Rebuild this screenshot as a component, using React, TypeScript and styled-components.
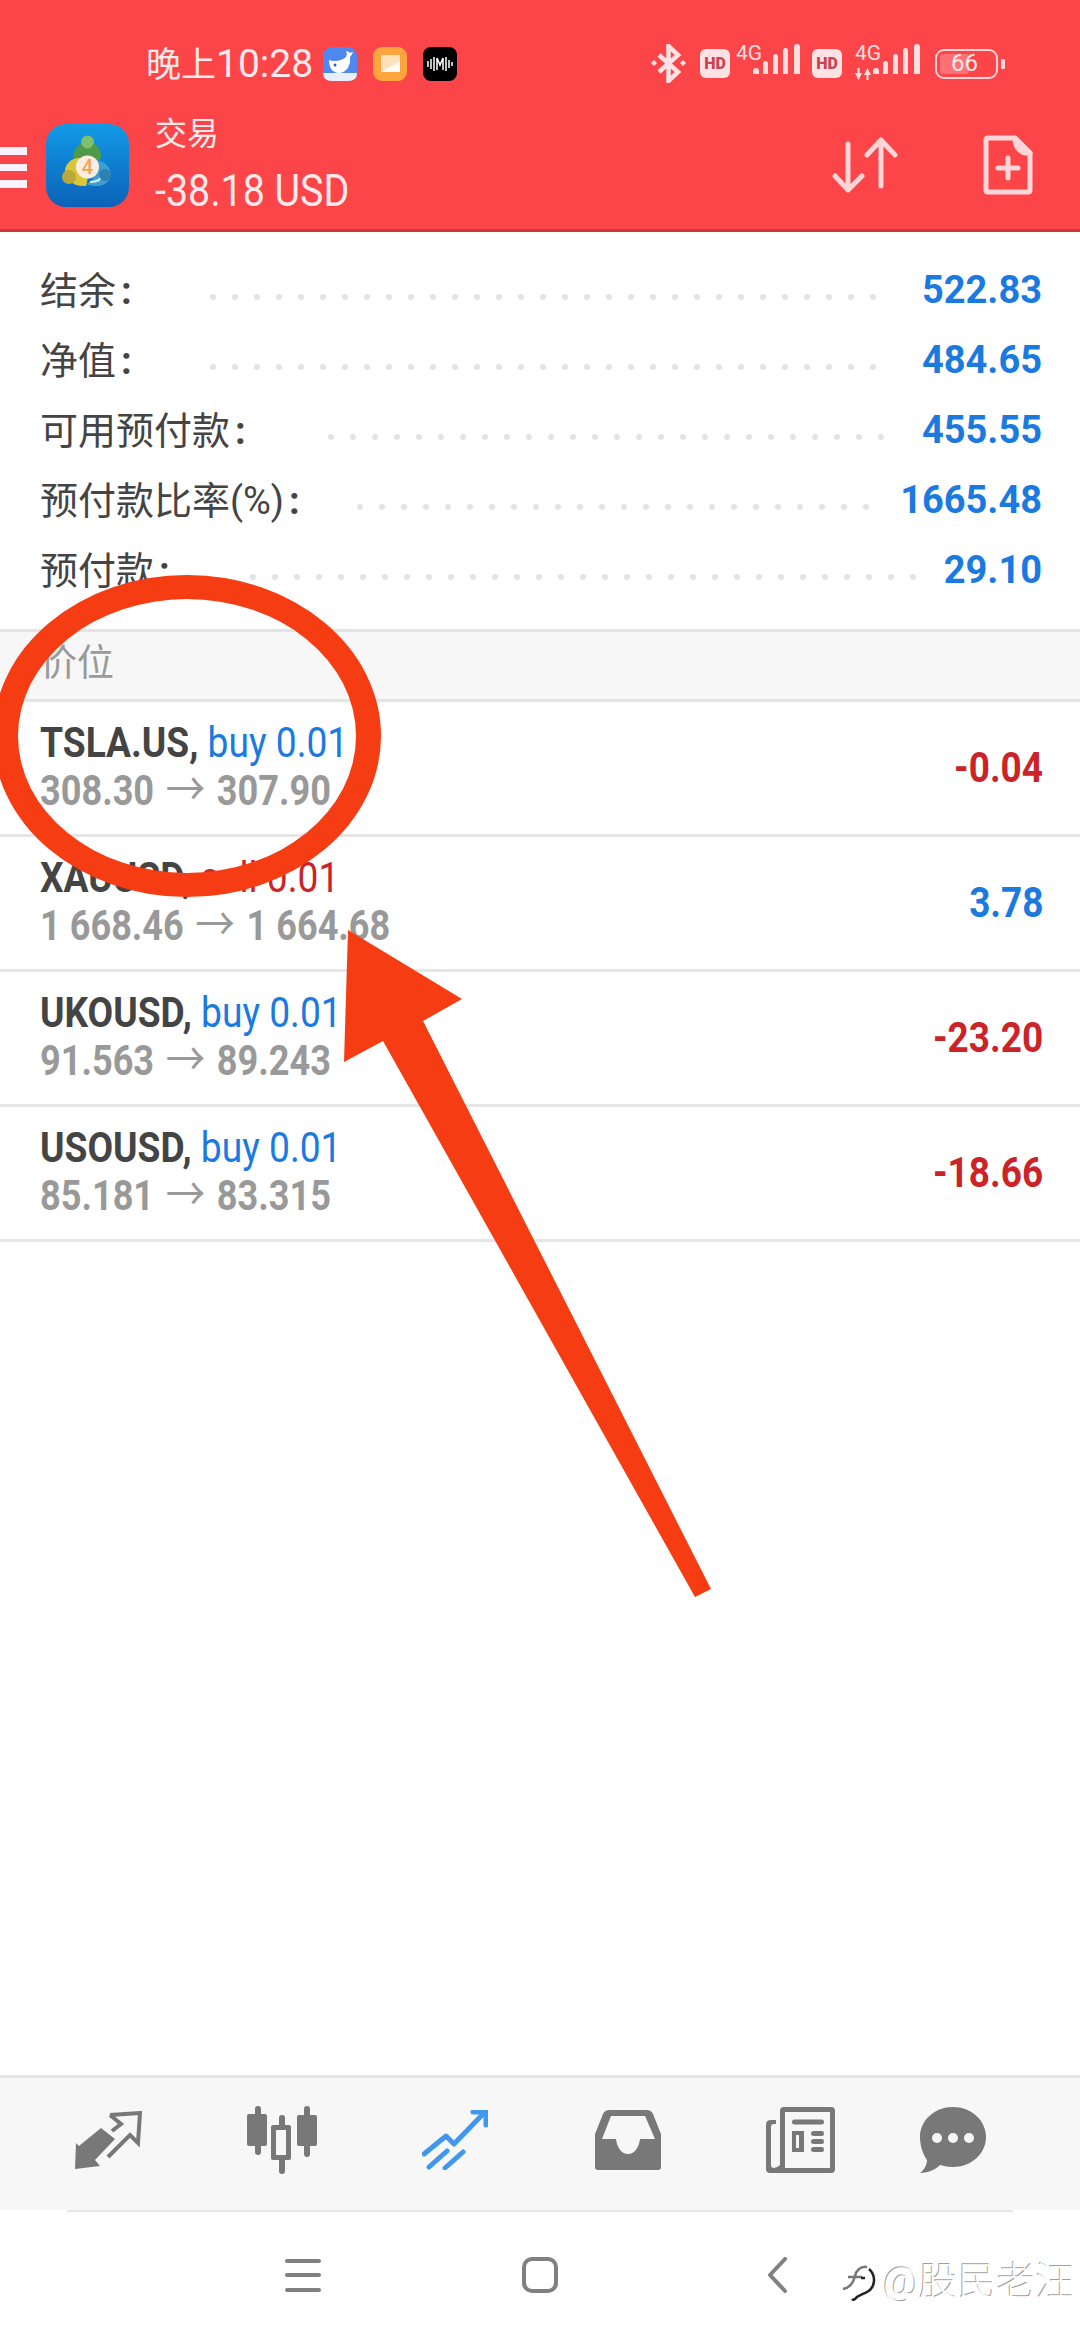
import styled, { createGlobalStyle } from "styled-components";

interface Account {
  label: string;
  value: string;
  labelWidth: number;
  dots: number;
}

interface Trade {
  symbol: string;
  side: "buy" | "sell";
  open: string;
  close: string;
  profit: string;
}

const accounts: Account[] = [
  { label: "结余", value: "522.83", labelWidth: 170, dots: 31 },
  { label: "净值", value: "484.65", labelWidth: 170, dots: 31 },
  { label: "可用预付款", value: "455.55", labelWidth: 288, dots: 26 },
  { label: "预付款比率(%)", value: "1665.48", labelWidth: 317, dots: 24 },
  { label: "预付款", value: "29.10", labelWidth: 210, dots: 31 },
];

const trades: Trade[] = [
  { symbol: "TSLA.US", side: "buy", open: "308.30", close: "307.90", profit: "-0.04" },
  { symbol: "XAUUSD", side: "sell", open: "1 668.46", close: "1 664.68", profit: "3.78" },
  { symbol: "UKOUSD", side: "buy", open: "91.563", close: "89.243", profit: "-23.20" },
  { symbol: "USOUSD", side: "buy", open: "85.181", close: "83.315", profit: "-18.66" },
];

const BLUE = "#1a7ae0";
const RED = "#cc2329";
const GREY = "#787878";

const Global = createGlobalStyle`
  html, body {
    margin: 0;
    padding: 0;
    background: #fff;
  }
  body {
    font-family: Roboto, "Noto Sans CJK SC", sans-serif;
  }
`;

const SignalBars = () => (
  <svg width="47" height="30" viewBox="0 0 47 30" fill="#ffdfe0">
    <path d="M0 30v-3q0-3 3-3t3 3v3z" />
    <path d="M10 30V20q0-3 2.500-3t2.500 3v10z" />
    <path d="M20 30V13q0-3 2.500-3t2.500 3v17z" />
    <path d="M30 30V7q0-3 2.500-3t2.500 3v23z" />
    <path d="M41 30V3q0-3 3-3t3 3v27z" />
  </svg>
);

const App = () => {
  return (
    <Page>
      <Global />
      <Header>
        <StatusBar>
          <Time>
            晚上<TimeDigits>10:28</TimeDigits>
          </Time>
          <AppTray>
            <svg width="34" height="34" viewBox="0 0 34 34">
              <rect width="34" height="34" rx="9" fill="#4f88ee" />
              <path d="M0 26h34q0 8-9 8H9q-9 0-9-8z" fill="#e8f0ff" />
              <path d="M6 13c5 2 13 1 17-3 1-2 1-4 0-6 2 0 3 1 4 2 1-1 2-1 3-1-1 2-2 4-3 5 1 9-4 16-11 16S6 20 6 13z" fill="#fff" />
              <circle cx="12" cy="18" r="1.500" fill="#2a5fc0" />
            </svg>
            <svg width="34" height="34" viewBox="0 0 34 34">
              <rect width="34" height="34" rx="9" fill="#ffa53e" />
              <rect x="8" y="8" width="19" height="17" fill="#ffe0b8" />
              <path d="M8 25l19-11v11z" fill="#fff" opacity="0.85" />
            </svg>
            <svg width="34" height="34" viewBox="0 0 34 34" fill="none" stroke="#fff" strokeWidth="1.500">
              <rect width="34" height="34" rx="8" fill="#000" stroke="none" />
              <path d="M5 14v6M8 12v10M11 10v14M14 23V11l3 7 3-7v12M23 10v14M26 13v8M29 15v4" />
            </svg>
          </AppTray>
          <StatusIcons>
            <svg width="35" height="39" viewBox="0 0 35 39" fill="none" stroke="#ffe3e4" strokeWidth="4.500">
              <path d="M8 11l19 17-9.500 9V2L27 11 8 28" />
              <path d="M3 16l3 3-3 3-3-3z" fill="#ffe3e4" stroke="none" />
              <path d="M32 16l3 3-3 3-3-3z" fill="#ffe3e4" stroke="none" />
            </svg>
            <HdBadge $left={14}>HD</HdBadge>
            <NetCell $left={6} $width={64}>
              <NetLabel>4G</NetLabel>
              <SignalBars />
            </NetCell>
            <HdBadge $left={12}>HD</HdBadge>
            <NetCell $left={13} $width={65}>
              <NetLabel>4G</NetLabel>
              <NetActivity viewBox="0 0 16 12" fill="#ffdfe0">
                <path d="M0 5h2.500V0h2v5H7l-3.500 7z" />
                <path d="M9 7h2.500v5h2V7H16l-3.500-7z" />
              </NetActivity>
              <SignalBars />
            </NetCell>
            <Battery>
              <BatteryFill />
              <BatteryText>66</BatteryText>
            </Battery>
            <BatteryNub />
          </StatusIcons>
        </StatusBar>

        <AppBar>
          <Burger>
            <span />
            <span />
            <span />
          </Burger>
          <AppLogo viewBox="0 0 83 83">
            <defs>
              <linearGradient id="mt4bg" x1="0" y1="0" x2="0" y2="1">
                <stop offset="0" stopColor="#129ae6" />
                <stop offset="1" stopColor="#0b62b8" />
              </linearGradient>
            </defs>
            <rect width="83" height="83" rx="20" fill="url(#mt4bg)" />
            <path d="M28 36c-2-8 3-14 8-17 1-5 9-5 11 0 6 3 10 10 7 17z" fill="#4f9a48" />
            <circle cx="41.500" cy="18" r="6.500" fill="#7fc06c" />
            <path d="M34 34c-7-1-15 5-15 13 0 9 9 16 21 15 3-8 2-20-6-28z" fill="#d8c538" />
            <circle cx="23" cy="53" r="7" fill="#b9a93c" />
            <path d="M50 36c9 1 15 8 15 15-1 9-12 14-25 9 8-3 13-13 10-24z" fill="#3f9fd0" />
            <path d="M44 58c7 0 12-3 13-9" fill="none" stroke="#d9f0fa" strokeWidth="2" />
            <circle cx="59" cy="51" r="6" fill="#2b80b4" />
            <circle cx="41.500" cy="43" r="11.500" fill="#fbeee0" />
            <LogoDigit x="41.500" y="50" textAnchor="middle">4</LogoDigit>
          </AppLogo>
          <TitleBlock>
            <ScreenTitle>交易</ScreenTitle>
            <Balance>-38.18 USD</Balance>
          </TitleBlock>
          <SortIcon viewBox="0 0 66 57" fill="none" stroke="#ffd5d7" strokeWidth="5" strokeLinecap="round" strokeLinejoin="round">
            <path d="M16 8v46M3 40l13 14 14-14" />
            <path d="M49 4v46M35 19L49 4l14 15" />
          </SortIcon>
          <NewOrderIcon viewBox="0 0 50 60" fill="none" stroke="#ffd5d7" strokeWidth="5" strokeLinejoin="round">
            <path d="M5 3h27l15 15v37q0 2-2 2H5q-2 0-2-2V5q0-2 2-2z" />
            <path d="M32 3l15 15c-9 1-15-5-15-15z" fill="#ffd5d7" />
            <path d="M25 23v20M15 33h20" strokeLinecap="round" />
          </NewOrderIcon>
        </AppBar>
      </Header>

      <AccountPanel>
        {accounts.map((a) => (
          <AccountRow key={a.label}>
            <AccountLabel $width={a.labelWidth}>
              {a.label}
              <Colon>:</Colon>
            </AccountLabel>
            <Leader>
              {Array.from({ length: a.dots }).map((_, i) => (
                <LeaderDot key={i} />
              ))}
            </Leader>
            <AccountValue>{a.value}</AccountValue>
          </AccountRow>
        ))}
      </AccountPanel>

      <SectionHeader>价位</SectionHeader>

      {trades.map((t) => (
        <TradeRow key={t.symbol}>
          <TradeInfo>
            <TradeLine>
              <Symbol>{t.symbol}, </Symbol>
              <Side $color={t.side === "buy" ? BLUE : RED}>{t.side} 0.01</Side>
            </TradeLine>
            <PriceLine>
              {t.open} <PriceArrow>→</PriceArrow> {t.close}
            </PriceLine>
          </TradeInfo>
          <Profit $color={t.profit.startsWith("-") ? RED : BLUE}>{t.profit}</Profit>
        </TradeRow>
      ))}

      <Spacer />

      <TabBar>
        <TabCell>
          <svg width="67" height="59" viewBox="0 0 67 59">
            <path d="M0 58l1-26 3 3 22-18 14 11-20 21 5 6z" fill={GREY} />
            <path d="M35 4l30-2-2 30-8-8-22 22M35 4l11 9-9 7" fill="none" stroke={GREY} strokeWidth="4" />
          </svg>
        </TabCell>
        <TabCell>
          <svg width="70" height="68" viewBox="0 0 70 68" fill={GREY}>
            <rect x="8" width="6" height="49" rx="3" />
            <rect y="8" width="20" height="32" rx="2" />
            <rect x="32" y="9" width="6" height="59" rx="3" />
            <rect x="24" y="19" width="20" height="35" rx="2" />
            <rect x="29" y="24" width="10" height="25" fill="#f7f7f7" />
            <rect x="57" width="6" height="51" rx="3" />
            <rect x="50" y="9" width="20" height="31" rx="2" />
          </svg>
        </TabCell>
        <TabCell>
          <svg width="66" height="60" viewBox="0 0 66 60" fill="none" stroke="#3f97ee" strokeWidth="5" strokeLinecap="round" strokeLinejoin="round">
            <path d="M2 44l22-18 8 8L62 3" />
            <path d="M51 2h13v13" />
            <path d="M7 57l18-16M23 58l18-16" />
          </svg>
        </TabCell>
        <TabCell>
          <svg width="66" height="60" viewBox="0 0 66 60" fill={GREY}>
            <path
              fillRule="evenodd"
              d="M14 0h38q4 0 6 4l8 20v33q0 3-3 3H3q-3 0-3-3V24L8 4q2-4 6-4zM16 6L7 29h14c1 9 6 15 12 15s11-6 12-15h15L50 6z"
            />
          </svg>
        </TabCell>
        <TabCell>
          <svg width="69" height="66" viewBox="0 0 69 66" fill={GREY}>
            <path
              fillRule="evenodd"
              d="M18 0h47q4 0 4 4v58q0 4-4 4H4q-4 0-4-4V18q0-5 5-5h5v4H8q-3 0-3 3v38q0 3 3 3t6-3V4q0-4 4-4zm1 5v56h45V5z"
            />
            <rect x="26" y="12.500" width="32" height="5" rx="2.500" />
            <path fillRule="evenodd" d="M26 24h12v21H26zm4 4v13h3V28z" />
            <rect x="45" y="24" width="13" height="5" rx="2.500" />
            <rect x="45" y="32" width="13" height="5" rx="2.500" />
            <rect x="45" y="40" width="13" height="5" rx="2.500" />
          </svg>
        </TabCell>
        <TabCell>
          <svg width="66" height="66" viewBox="0 0 66 66" fill={GREY}>
            <path d="M33 0c18 0 33 13 33 30S51 60 33 60c-5 0-9-1-13-2-4 4-11 8-20 8 4-3 7-8 7-13C3 47 0 39 0 30 0 13 15 0 33 0z" />
            <circle cx="17" cy="31" r="5" fill="#f7f7f7" />
            <circle cx="33" cy="31" r="5" fill="#f7f7f7" />
            <circle cx="49" cy="31" r="5" fill="#f7f7f7" />
          </svg>
        </TabCell>
      </TabBar>

      <SystemNav>
        <NavMenu>
          <span />
          <span />
          <span />
        </NavMenu>
        <NavHome />
        <svg width="20" height="36" viewBox="0 0 20 36" fill="none" stroke="#808080" strokeWidth="4" strokeLinecap="round" strokeLinejoin="round">
          <path d="M18 2L3 18l15 16" />
        </svg>
      </SystemNav>

      <Watermark>
        <svg width="36" height="38" viewBox="0 0 36 38" fill="none" stroke="#222" strokeWidth="2.500">
          <path d="M2 26c6-1 10-5 12-13 1-5 5-10 12-9M7 14h14" stroke="#777" />
          <path d="M28 6c7 6 7 18-2 23-5 3-9 3-12 7-1 1-2 1-3 0" />
          <path d="M20 15h4" />
        </svg>
        <WatermarkText>@股民老汪</WatermarkText>
      </Watermark>

      <Markup viewBox="0 0 1080 2340">
        <path
          fillRule="evenodd"
          fill="#f63c12"
          d="M-7 736a194 161 0 1 0 388 0a194 161 0 1 0-388 0zM18 736a169 137 0 1 1 338 0a169 137 0 1 1-338 0z"
        />
        <polygon fill="#f63c12" points="348,930 462,999 423,1021 711,1589 695,1597 383,1041 344,1062" />
      </Markup>
    </Page>
  );
};

const Page = styled.div`
  position: relative;
  width: 1080px;
  height: 2340px;
  display: flex;
  flex-direction: column;
  overflow: hidden;
  background: #fff;
`;

const Header = styled.header`
  height: 229px;
  background: #fb4549;
  border-bottom: 3px solid #c43b3f;
  color: #ffe9ea;
`;

const StatusBar = styled.div`
  height: 110px;
  display: flex;
  align-items: flex-start;
  padding-left: 146px;
`;

const Time = styled.div`
  margin-top: 41px;
  width: 177px;
  font-size: 35px;
  line-height: 46px;
  white-space: nowrap;
`;

const TimeDigits = styled.span`
  font-size: 39px;
`;

const AppTray = styled.div`
  margin-top: 47px;
  display: flex;
  gap: 16px;
`;

const StatusIcons = styled.div`
  margin-left: 194px;
  margin-top: 44px;
  display: flex;
  align-items: flex-start;
`;

const HdBadge = styled.div<{ $left: number }>`
  width: 30px;
  height: 29px;
  margin-left: ${({ $left }) => $left}px;
  margin-top: 5px;
  border-radius: 6px;
  background: #ffe3e4;
  color: #c9434f;
  font-size: 16px;
  font-weight: 900;
  line-height: 29px;
  text-align: center;
`;

const NetCell = styled.div<{ $left: number; $width: number }>`
  position: relative;
  width: ${({ $width }) => $width}px;
  height: 36px;
  margin-left: ${({ $left }) => $left}px;
  display: flex;
  justify-content: flex-end;
`;

const NetLabel = styled.span`
  position: absolute;
  left: 0;
  top: -1px;
  font-size: 21px;
  line-height: 21px;
  color: #ffdfe0;
`;

const NetActivity = styled.svg`
  position: absolute;
  left: 0;
  bottom: 0;
  width: 16px;
  height: 12px;
`;

const Battery = styled.div`
  position: relative;
  width: 63px;
  height: 30px;
  margin-left: 15px;
  margin-top: 5px;
  box-sizing: border-box;
  border: 2.500px solid #ffd5d7;
  border-radius: 9px;
  overflow: hidden;
`;

const BatteryFill = styled.div`
  position: absolute;
  left: 3px;
  top: 3px;
  bottom: 3px;
  width: 29px;
  border-radius: 3px;
  background: #ff7175;
`;

const BatteryText = styled.span`
  position: absolute;
  left: 14px;
  top: 0;
  font-size: 24px;
  line-height: 25px;
  color: #ffe9ea;
`;

const BatteryNub = styled.div`
  width: 4px;
  height: 10px;
  margin-left: 3px;
  margin-top: 15px;
  border-radius: 1px;
  background: #ffd5d7;
`;

const AppBar = styled.div`
  height: 119px;
  display: flex;
  align-items: flex-start;
`;

const Burger = styled.div`
  width: 27px;
  margin-top: 37px;
  display: flex;
  flex-direction: column;
  gap: 9px;

  span {
    display: block;
    height: 7.500px;
    background: #f6f1fb;
  }
`;

const AppLogo = styled.svg`
  width: 83px;
  height: 83px;
  margin-left: 19px;
  margin-top: 14px;
`;

const LogoDigit = styled.text`
  font-family: Roboto, sans-serif;
  font-size: 20px;
  font-weight: 500;
  fill: #eda75a;
`;

const TitleBlock = styled.div`
  margin-left: 26px;
  width: 625px;
`;

const ScreenTitle = styled.div`
  font-size: 32px;
  line-height: 48px;
`;

const Balance = styled.div`
  font-size: 45px;
  line-height: 66px;
  white-space: nowrap;
  transform: scaleX(0.875);
  transform-origin: left;
`;

const SortIcon = styled.svg`
  flex: none;
  width: 66px;
  height: 57px;
  margin-left: 52px;
  margin-top: 26px;
`;

const NewOrderIcon = styled.svg`
  flex: none;
  width: 50px;
  height: 60px;
  margin-left: 85px;
  margin-top: 25px;
`;

const AccountPanel = styled.section`
  padding: 21px 38px 26px 40px;
`;

const AccountRow = styled.div`
  height: 70px;
  display: flex;
  align-items: center;
`;

const AccountLabel = styled.div<{ $width: number }>`
  flex: none;
  width: ${({ $width }) => $width}px;
  padding-bottom: 2px;
  font-size: 38px;
  color: #444;
  white-space: nowrap;
`;

const Colon = styled.span`
  margin-left: 5px;
  font-weight: 700;
`;

const Leader = styled.div`
  display: flex;
  gap: 16px;
  margin-top: 18px;
`;

const LeaderDot = styled.span`
  width: 6px;
  height: 6px;
  border-radius: 50%;
  background: #e3e3e3;
`;

const AccountValue = styled.div`
  margin-left: auto;
  margin-top: 3px;
  font-size: 38px;
  font-weight: 700;
  color: ${BLUE};
`;

const SectionHeader = styled.div`
  height: 67px;
  padding-left: 40px;
  border-top: 3px solid #e4e4e4;
  border-bottom: 3px solid #e4e4e4;
  background: #f7f7f7;
  color: #999;
  font-size: 37px;
  line-height: 63px;
`;

const TradeRow = styled.div`
  height: 135px;
  padding: 0 37px 2px 40px;
  box-sizing: border-box;
  border-bottom: 3px solid #e6e6e6;
  display: flex;
  align-items: center;
  justify-content: space-between;
`;

const TradeInfo = styled.div`
  font-size: 42px;
  line-height: 48px;
  white-space: nowrap;
`;

const TradeLine = styled.div`
  transform: scaleX(0.885);
  transform-origin: left;
`;

const Symbol = styled.span`
  font-weight: 700;
  color: #444;
`;

const Side = styled.span<{ $color: string }>`
  color: ${({ $color }) => $color};
`;

const PriceLine = styled.div`
  font-weight: 700;
  color: #999;
  transform: scaleX(0.86);
  transform-origin: left;
`;

const PriceArrow = styled.span`
  margin: 0 3px;
  font-family: "Noto Sans CJK SC", sans-serif;
  font-size: 46px;
  font-weight: 400;
  line-height: 0;
`;

const Profit = styled.div<{ $color: string }>`
  font-size: 42px;
  font-weight: 700;
  color: ${({ $color }) => $color};
  transform: scaleX(0.88);
  transform-origin: right;
`;

const Spacer = styled.div`
  flex: 1;
`;

const TabBar = styled.nav`
  height: 132px;
  box-sizing: content-box;
  border-top: 3px solid #e4e4e4;
  background: #f7f7f7;
  display: grid;
  grid-template-columns: repeat(5, 173px) 132px;
  padding-left: 22px;
  align-items: start;
  justify-items: center;
`;

const TabCell = styled.div`
  height: 124px;
  display: flex;
  align-items: center;
  justify-content: center;
`;

const SystemNav = styled.div`
  height: 130px;
  padding-left: 285px;
  box-sizing: border-box;
  display: flex;
  align-items: center;
  background: linear-gradient(#e6e6e6, #e6e6e6) 67px 0 / 946px 2px no-repeat;
`;

const NavMenu = styled.div`
  width: 36px;
  display: flex;
  flex-direction: column;
  gap: 10.500px;

  span {
    display: block;
    height: 4px;
    border-radius: 2px;
    background: #808080;
  }
`;

const NavHome = styled.div`
  width: 36px;
  height: 36px;
  margin: 0 209px 0 201px;
  box-sizing: border-box;
  border: 4px solid #808080;
  border-radius: 10px;
`;

const Watermark = styled.div`
  position: absolute;
  left: 841px;
  top: 2262px;
  display: flex;
  align-items: center;
  gap: 6px;
`;

const WatermarkText = styled.span`
  font-size: 39px;
  font-weight: 300;
  line-height: 40px;
  color: #fff;
  text-shadow: -1px -1px 0 rgba(0, 0, 0, 0.4);
  white-space: nowrap;
`;

const Markup = styled.svg`
  position: absolute;
  left: 0;
  top: 0;
  width: 1080px;
  height: 2340px;
  pointer-events: none;
`;

export default App;
